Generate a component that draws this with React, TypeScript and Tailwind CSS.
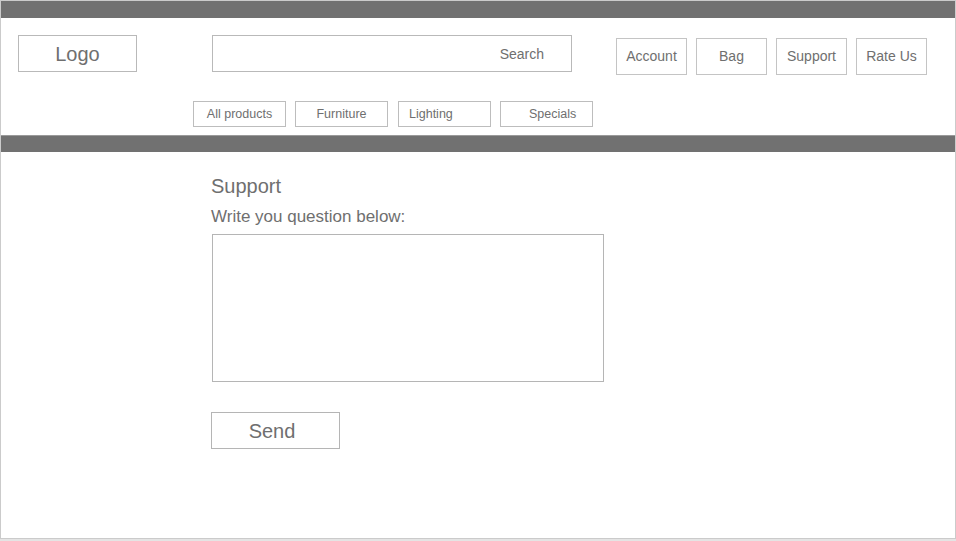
import React from 'react';

const navLinks = ['Account', 'Bag', 'Support', 'Rate Us'];

const App: React.FC = () => {
  return (
    <div className="w-[956px] h-[541px] bg-[#e4e4e4] font-['Liberation_Sans',Arial,sans-serif] text-[#6f6f6f]">
      <div className="h-[539px] border border-[#cbcbcb] bg-white flex flex-col">
        {/* top bar */}
        <div className="h-[17px] bg-[#717171] shrink-0" />

        {/* header row */}
        <div className="flex items-start pl-[17px] pt-[17px]">
          <div className="w-[119px] h-[37px] border border-[#b9b9b9] flex items-center justify-center text-[20px]">
            Logo
          </div>
          <div className="ml-[75px] w-[360px] h-[37px] border border-[#b9b9b9] flex items-center justify-end pr-[27px] pt-px text-[14px]">
            Search
          </div>
          <div className="ml-[44px] mt-[3px] flex gap-[9px]">
            {navLinks.map((l) => (
              <div
                key={l}
                className="w-[71px] h-[37px] border border-[#c4c4c4] flex items-center justify-center text-[14px]"
              >
                {l}
              </div>
            ))}
          </div>
        </div>

        {/* categories */}
        <div className="flex pl-[192px] mt-[26px] text-[12.5px]">
          <div className="w-[93px] h-[26px] border border-[#bdbdbd] flex items-center justify-center pt-px">All products</div>
          <div className="ml-[9px] w-[93px] h-[26px] border border-[#bdbdbd] flex items-center justify-center pt-px">Furniture</div>
          <div className="ml-[10px] w-[93px] h-[26px] border border-[#bdbdbd] flex items-center pl-[10px] pt-px">Lighting</div>
          <div className="ml-[9px] w-[93px] h-[26px] border border-[#bdbdbd] flex items-center pl-[28px] pt-px">Specials</div>
        </div>

        {/* second bar */}
        <div className="mt-[8px] h-[17px] bg-[#717171] border-t border-[#9a9a9a] shrink-0" />

        {/* support form */}
        <div className="pl-[210px] pt-[22px] flex flex-col items-start">
          <h1 className="text-[20px] leading-[24px]">Support</h1>
          <p className="mt-[9px] text-[17px] leading-[20px]">Write you question below:</p>
          <div className="mt-[7px] ml-px w-[392px] h-[148px] border border-[#b5b5b5]" />
          <div className="mt-[30px] w-[129px] h-[37px] border border-[#b5b5b5] flex items-center justify-center pr-[7px] text-[20px]">
            Send
          </div>
        </div>
      </div>
    </div>
  );
};

export default App;
